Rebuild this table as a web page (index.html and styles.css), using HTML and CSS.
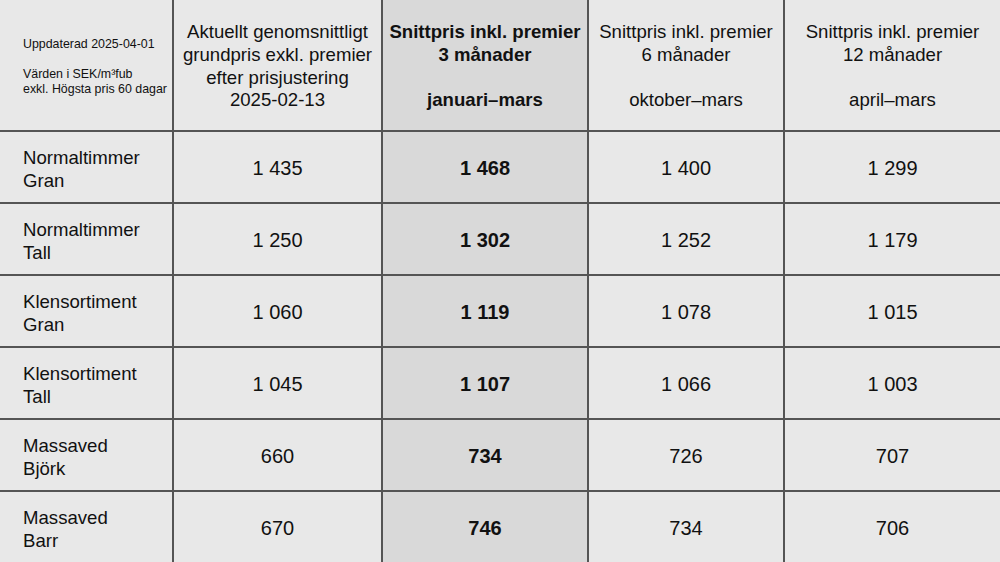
FILE: index.html
```html
<!DOCTYPE html>
<html lang="sv">
<head>
<meta charset="utf-8">
<title>Snittpriser</title>
<link rel="stylesheet" href="styles.css">
</head>
<body>
<div class="table">
  <div class="cell head first">
    <div class="note">Uppdaterad 2025-04-01<br>&nbsp;<br>Värden i SEK/m³fub<br>exkl. Högsta pris 60 dagar</div>
  </div>
  <div class="cell head">Aktuellt genomsnittligt<br>grundpris exkl. premier<br>efter prisjustering<br>2025-02-13</div>
  <div class="cell head hl bold">Snittpris inkl. premier<br>3 månader<br>&nbsp;<br>januari–mars</div>
  <div class="cell head">Snittpris inkl. premier<br>6 månader<br>&nbsp;<br>oktober–mars</div>
  <div class="cell head last">Snittpris inkl. premier<br>12 månader<br>&nbsp;<br>april–mars</div>

  <div class="cell label">Normaltimmer<br>Gran</div>
  <div class="cell val">1 435</div>
  <div class="cell val hl bold">1 468</div>
  <div class="cell val">1 400</div>
  <div class="cell val last">1 299</div>

  <div class="cell label">Normaltimmer<br>Tall</div>
  <div class="cell val">1 250</div>
  <div class="cell val hl bold">1 302</div>
  <div class="cell val">1 252</div>
  <div class="cell val last">1 179</div>

  <div class="cell label">Klensortiment<br>Gran</div>
  <div class="cell val">1 060</div>
  <div class="cell val hl bold">1 119</div>
  <div class="cell val">1 078</div>
  <div class="cell val last">1 015</div>

  <div class="cell label">Klensortiment<br>Tall</div>
  <div class="cell val">1 045</div>
  <div class="cell val hl bold">1 107</div>
  <div class="cell val">1 066</div>
  <div class="cell val last">1 003</div>

  <div class="cell label">Massaved<br>Björk</div>
  <div class="cell val">660</div>
  <div class="cell val hl bold">734</div>
  <div class="cell val">726</div>
  <div class="cell val last">707</div>

  <div class="cell label bottom">Massaved<br>Barr</div>
  <div class="cell val bottom">670</div>
  <div class="cell val hl bold bottom">746</div>
  <div class="cell val bottom">734</div>
  <div class="cell val last bottom">706</div>
</div>
</body>
</html>
```
FILE: styles.css
```css
html, body {
  margin: 0;
  padding: 0;
  width: 1000px;
  height: 562px;
  overflow: hidden;
  background: #e8e8e8;
}

.table {
  display: grid;
  grid-template-columns: 174px 209px 206px 196px 215px;
  grid-template-rows: 132px repeat(5, 72px) 70px;
  font-family: "Liberation Sans", Arial, sans-serif;
  color: #111;
}

.cell {
  box-sizing: border-box;
  border-right: 2px solid #555;
  border-bottom: 2px solid #555;
  background: #e8e8e8;
  display: flex;
  align-items: center;
  justify-content: center;
  text-align: center;
}

.cell.last { border-right: none; }
.cell.bottom { border-bottom: none; }

.hl { background: #d9d9d9; }
.bold { font-weight: bold; }

.head {
  font-size: 18.6px;
  line-height: 22.7px;
  padding: 3px 2px 0;
}

.first {
  justify-content: flex-start;
  text-align: left;
  padding-left: 23px;
}

.note {
  font-size: 12.4px;
  line-height: 15px;
}

.label {
  justify-content: flex-start;
  text-align: left;
  padding-left: 23px;
  padding-top: 3px;
  font-size: 18.6px;
  line-height: 23px;
}

.val {
  font-size: 20px;
  padding-top: 2px;
}
```
